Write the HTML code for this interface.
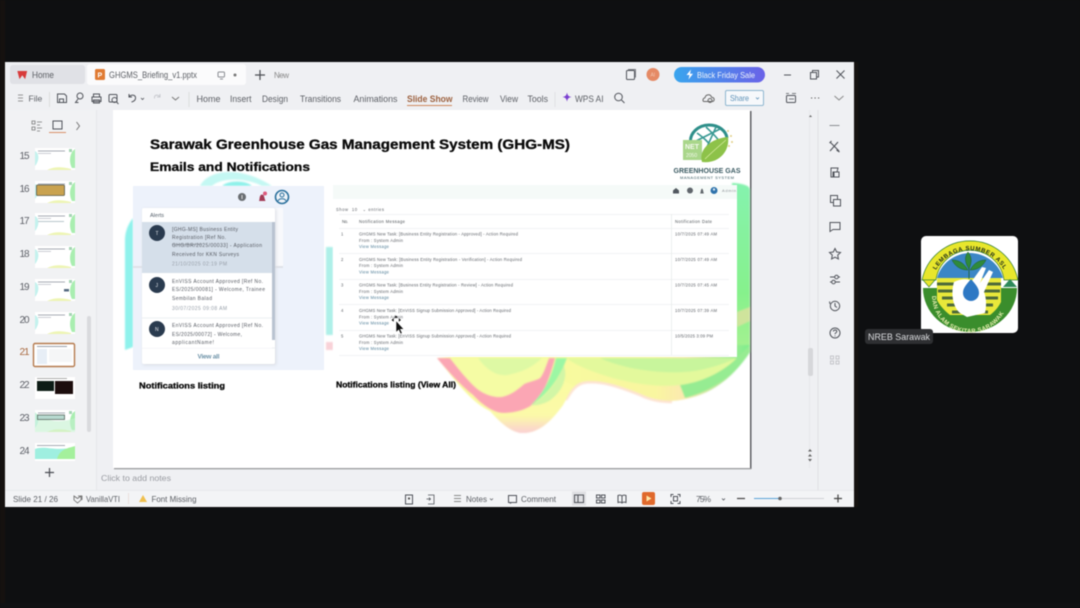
<!DOCTYPE html>
<html><head><meta charset="utf-8"><title>GHGMS Briefing</title>
<style>
html,body{margin:0;padding:0;background:#0e0f11;width:1080px;height:608px;overflow:hidden}
svg{display:block;filter:blur(.4px)}
text{font-family:"Liberation Sans",sans-serif}
.t{font-size:9px;fill:#5c5f65}
.s{font-size:5px;fill:#565a62}
.i{fill:none;stroke:#50535a;stroke-width:1}
.b{font-weight:bold;fill:#0a0a0a;stroke:#0a0a0a;stroke-width:.3}
.r{font-size:4.2px;fill:#60646a}
.v{font-size:4.2px;fill:#54819a}
</style></head><body>
<svg width="1080" height="608" viewBox="0 0 1080 608" xmlns="http://www.w3.org/2000/svg">
<defs>
<filter id="bl"><feGaussianBlur stdDeviation="1.5"/></filter>
<filter id="bl2"><feGaussianBlur stdDeviation=".8"/></filter>
<filter id="bl3"><feGaussianBlur stdDeviation=".2"/></filter>
<linearGradient id="pk" x1="0" y1="0" x2="0" y2="1"><stop offset="0" stop-color="#fafba0"/><stop offset=".7" stop-color="#fbf9a8"/><stop offset="1" stop-color="#fbcfd3"/></linearGradient>
<linearGradient id="gr" gradientUnits="userSpaceOnUse" x1="560" y1="0" x2="750" y2="0"><stop offset="0" stop-color="#f8fa9e"/><stop offset=".5" stop-color="#f9f6a0"/><stop offset=".66" stop-color="#fbe8b0"/><stop offset=".82" stop-color="#bde89a"/><stop offset="1" stop-color="#7cee8c"/></linearGradient>
<linearGradient id="sg" x1="0" y1="0" x2="0" y2="1"><stop offset="0" stop-color="#85f2ae"/><stop offset=".6" stop-color="#86f18c"/><stop offset="1" stop-color="#aef192"/></linearGradient>
<linearGradient id="bf" x1="0" y1="0" x2="1" y2="0"><stop offset="0" stop-color="#39a5ee"/><stop offset="1" stop-color="#6a62e8"/></linearGradient>
<g id="thumb">
<rect x="0" y="0" width="40" height="22" fill="#fff"/>
<path d="M0 3C4 5 5 12 0 18Z" fill="#c4f2ee"/>
<path d="M40 1C34 5 34 15 37 20L40 20Z" fill="#a9eeb0"/>
<path d="M12 22C20 18 28 19 36 21V22Z" fill="#eef5b4"/>
<rect x="3" y="2.500" width="27" height="1" fill="#a6abb4"/>
<rect x="3" y="5" width="13" height=".8" fill="#bec2c9"/>
<rect x="34" y="1" width="3" height="3" fill="#a5d4b4"/>
</g>
</defs>

<rect width="1080" height="608" fill="#0e0f11"/>
<rect x="0" y="0" width="5" height="608" fill="#15110f"/>
<rect x="854" y="62" width="4" height="445" fill="#151210"/>
<rect x="0" y="603" width="1080" height="5" fill="#101113"/>

<!-- window -->
<rect x="5" y="62" width="849" height="445" fill="#eff0f3"/>

<!-- tab strip -->
<rect x="10" y="65" width="75" height="19" rx="3" fill="#e0e1e6"/>
<path d="M18 71.500h8.500l-1.600 6.500-2.600-3.500-2.600 3.500z" fill="#d83b3b" stroke="#d83b3b" stroke-width="1"/>
<text x="32" y="78" class="t" textLength="22" lengthAdjust="spacingAndGlyphs">Home</text>
<rect x="87" y="64" width="159" height="21" rx="3" fill="#fbfbfc"/>
<rect x="95" y="69" width="10" height="11" rx="1.500" fill="#e07b33"/>
<text x="97.500" y="77.500" style="font-size:7px;font-weight:bold;fill:#fff">P</text>
<text x="109" y="78" class="t" textLength="88" lengthAdjust="spacingAndGlyphs">GHGMS_Briefing_v1.pptx</text>
<rect x="218" y="72" width="6.500" height="5" rx="1" class="i" style="stroke:#8a8d93"/>
<path d="M220 79h3" class="i" style="stroke:#8a8d93"/>
<circle cx="235" cy="75" r="1.500" fill="#777"/>
<path d="M260 70v10M255 75h10" stroke="#4a4c52" stroke-width="1.200"/>
<text x="274" y="78" class="t" style="font-size:8px;fill:#888" textLength="15">New</text>
<rect x="626.500" y="70.500" width="8" height="9" rx="1" class="i"/>
<path d="M628 69.500h7.500v8" class="i" style="stroke-width:.7"/>
<circle cx="653" cy="74.500" r="6.500" fill="#e58a65"/>
<text x="650.500" y="76.500" style="font-size:5px;fill:#f4c7b2">Al</text>
<rect x="674" y="67" width="91" height="15.500" rx="7.700" fill="url(#bf)"/>
<path d="M691 69.500l-4.500 5.500h3l-1 4.500 4.500-5.800h-3z" fill="#fff"/>
<text x="697" y="78" style="font-size:8.500px;fill:#f0f4fb" textLength="58" lengthAdjust="spacingAndGlyphs">Black Friday Sale</text>
<path d="M784 75h7" stroke="#50535a"/>
<rect x="810.500" y="72.500" width="6" height="6.500" class="i"/>
<path d="M812.500 72.500v-2h6v6.500h-2" class="i"/>
<path d="M836.500 70.500l8 8M844.500 70.500l-8 8" class="i"/>

<!-- toolbar -->
<path d="M18 95h5M18 98h5M18 101h5" stroke="#777" stroke-width=".8"/>
<text x="28.500" y="101.500" class="t" style="font-size:8.500px">File</text>
<path d="M49.500 92v15" stroke="#ddd"/>
<path d="M57.500 94h7l2 2v6.500h-9z" class="i"/><path d="M59.500 102v-3h4v3" class="i"/>
<circle cx="80" cy="96" r="3" class="i"/><path d="M78 99l-2.500 3.500h3" class="i"/>
<path d="M92 97h9v4.500h-9zM93.500 97v-3h6v3M93.500 100h6v3h-6z" class="i"/>
<rect x="109" y="94.500" width="8" height="7.500" rx="1" class="i"/><circle cx="114.500" cy="100" r="2.500" class="i"/><path d="M116.500 102l2 2" class="i"/>
<path d="M129 96.500c3-2.500 7-1.500 6.500 2-.3 2-2 3-4 3.500M129 94v3h3" class="i"/>
<path d="M141 98l1.500 1.500 1.500-1.500" class="i" style="stroke-width:.8"/>
<path d="M160 96.500c-3-2.500-6-1.500-5.500 2M160 94v3h-3" class="i" style="stroke:#c8cacf"/>
<path d="M172 97l3.500 3 3.500-3" class="i" style="stroke:#777"/>
<path d="M189 92v15" stroke="#ddd"/>
<text x="196.500" y="102" class="t" textLength="24" lengthAdjust="spacingAndGlyphs">Home</text>
<text x="230" y="102" class="t" textLength="21.500" lengthAdjust="spacingAndGlyphs">Insert</text>
<text x="262" y="102" class="t" textLength="26" lengthAdjust="spacingAndGlyphs">Design</text>
<text x="300" y="102" class="t" textLength="41" lengthAdjust="spacingAndGlyphs">Transitions</text>
<text x="353.500" y="102" class="t" textLength="44" lengthAdjust="spacingAndGlyphs">Animations</text>
<text x="407" y="102" class="t" style="font-weight:bold;fill:#9d6240" textLength="45.500" lengthAdjust="spacingAndGlyphs">Slide Show</text>
<text x="462.500" y="102" class="t" textLength="26" lengthAdjust="spacingAndGlyphs">Review</text>
<text x="500" y="102" class="t" textLength="18" lengthAdjust="spacingAndGlyphs">View</text>
<text x="527.500" y="102" class="t" textLength="20.500" lengthAdjust="spacingAndGlyphs">Tools</text>
<text x="575" y="102" class="t" textLength="28.500" lengthAdjust="spacingAndGlyphs">WPS AI</text>
<rect x="407" y="105" width="45" height="1" fill="#cf8a5e"/>
<path d="M555 92v15" stroke="#e0e0e3"/>
<path d="M567 92.500c.6 3 1.500 4 4.500 4.500-3 .5-3.900 1.500-4.500 4.800-.6-3.300-1.500-4.300-4.500-4.800 3-.5 3.900-1.500 4.500-4.500z" fill="#7a3fd0"/>
<circle cx="618.500" cy="97" r="3.800" class="i"/><path d="M621.500 100l3 3" class="i"/>
<path d="M704 101.500h8c3 0 3-4-.5-4.300-1-3.500-6-3-6.500.5-2.500.5-2.500 3.800-1 3.800z" class="i" style="stroke:#666"/><circle cx="710" cy="100.500" r="2" class="i" style="stroke:#666"/>
<rect x="725.500" y="90.500" width="38" height="15" rx="1.500" fill="#f6f8fb" stroke="#8fb6d0"/>
<text x="730" y="101" style="font-size:8.500px;fill:#5f92b8" textLength="19" lengthAdjust="spacingAndGlyphs">Share</text>
<path d="M756 97.500l1.500 1.500 1.500-1.500" stroke="#5f92b8" fill="none" stroke-width=".8"/>
<rect x="786.500" y="95.500" width="9" height="7" rx="1" class="i"/><path d="M786 93.500h3M792 93.500h4M789 99h5" class="i" style="stroke-width:.7"/>
<path d="M811 98h1.200M814.500 98h1.200M818 98h1.200" stroke="#555" stroke-width="1"/>
<path d="M834.500 96l4.500 4 4.500-4" class="i" style="stroke:#888"/>

<!-- left side panel -->
<rect x="5" y="110" width="91" height="380" fill="#f1f2f4"/>
<rect x="96" y="110" width="1" height="380" fill="#e6e7ea"/>
<path d="M32 121h3v3h-3zM32 127h3v3h-3zM37 122h5M37 125h3M37 128h5M37 131h3" class="i" style="stroke:#777;stroke-width:.8"/>
<rect x="53" y="121" width="9" height="8" class="i"/>
<rect x="49" y="132" width="17" height="1" fill="#d9906a"/>
<path d="M76.500 122l3 4-3 4" class="i" style="stroke:#777"/>
<text x="19.500" y="159" style="font-size:10px;fill:#5c5f66" textLength="10">15</text>
<text x="19.500" y="192" style="font-size:10px;fill:#5c5f66" textLength="10">16</text>
<text x="19.500" y="224" style="font-size:10px;fill:#5c5f66" textLength="10">17</text>
<text x="19.500" y="257" style="font-size:10px;fill:#5c5f66" textLength="10">18</text>
<text x="19.500" y="290" style="font-size:10px;fill:#5c5f66" textLength="10">19</text>
<text x="19.500" y="323" style="font-size:10px;fill:#5c5f66" textLength="10">20</text>
<text x="19.500" y="355" style="font-size:10px;fill:#a8683e" textLength="10">21</text>
<text x="19.500" y="388" style="font-size:10px;fill:#5c5f66" textLength="10">22</text>
<text x="19.500" y="421" style="font-size:10px;fill:#5c5f66" textLength="10">23</text>
<text x="19.500" y="454" style="font-size:10px;fill:#5c5f66" textLength="10">24</text>
<g filter="url(#bl3)">
<use href="#thumb" x="35" y="148"/>
<use href="#thumb" x="35" y="181"/>
<rect x="36.500" y="185" width="28" height="10.500" rx="1" fill="#c9a24f" stroke="#55584a" stroke-width=".8"/>
<use href="#thumb" x="35" y="213"/>
<rect x="38" y="221" width="26" height="1" fill="#b8c6cc"/>
<use href="#thumb" x="35" y="246"/>
<use href="#thumb" x="35" y="279"/>
<rect x="64" y="289" width="5" height="2.500" fill="#556a80"/>
<use href="#thumb" x="35" y="312"/>
<rect x="33.500" y="343.500" width="41" height="23" rx="1.500" fill="#fff" stroke="#b57a4e" stroke-width="1.400"/>
<rect x="37" y="346" width="30" height="1" fill="#9aa0aa"/>
<rect x="37" y="349" width="10" height="15" fill="#e7eef6"/>
<rect x="49" y="349" width="23" height="13" fill="#f5f6f7"/>
<rect x="35" y="377" width="40" height="22" fill="#fff"/>
<rect x="37" y="381" width="17" height="10" fill="#0a1a14"/>
<rect x="55" y="381" width="18" height="13" fill="#1a0c0e"/>
<rect x="37" y="378" width="30" height="1" fill="#aaa"/>
<use href="#thumb" x="35" y="410"/>
<path d="M35 412C43 421 60 424 75 418V432H35Z" fill="#c3f0cf" opacity=".6"/>
<rect x="37.500" y="415" width="27" height="4.500" fill="#b7d9cf" stroke="#586a60" stroke-width=".8"/>
<rect x="35" y="443" width="40" height="18" fill="#fff"/>
<path d="M35 449C45 445 55 452 75 447V459H35Z" fill="#9fefe0"/>
<path d="M57 459C60 448 70 448 75 446V459Z" fill="#a4f09c"/>
<rect x="37" y="445" width="28" height="1" fill="#a6abb4"/>
</g>
<rect x="87" y="316" width="4" height="116" rx="2" fill="#d9dadd"/>
<path d="M49.500 468v9M45 472.500h9" stroke="#4a4c52" stroke-width="1.200"/>

<!-- right rail -->
<rect x="817.500" y="110" width="1" height="380" fill="#e0e1e4"/>
<path d="M829.500 125.500h10" stroke="#8a8c92"/>
<g class="i">
<path d="M830 142l9 9M838 142l-8 9M829.500 143l2-2M836.500 150l3 2" stroke-width="1.100"/>
<path d="M831 168h7l-1 4h-4v5h-2zM834 172h5v5h-5z"/>
<rect x="830.500" y="195.500" width="7" height="7"/><rect x="833.500" y="199.500" width="7" height="6.500" fill="#eff0f3"/>
<path d="M830 222.500h10v7h-7l-3 2z"/>
<path d="M835 248.500l1.700 3.500 3.800.5-2.800 2.600.7 3.900-3.400-1.800-3.400 1.800.7-3.900-2.800-2.600 3.800-.5z"/>
<path d="M830 277h5M838 277h2M830 282h2M835 282h5"/><circle cx="836.500" cy="277" r="1.800"/><circle cx="833.500" cy="282" r="1.800"/>
<circle cx="835" cy="306" r="4.700"/><path d="M835 303v3l2 1.500M830 304l-.5-2.500"/>
<circle cx="835" cy="333" r="5"/><path d="M833.300 331.500c.3-2 3.500-2 3.500 0 0 1.300-1.800 1.300-1.800 2.800M835 335.500v.8"/>
</g>
<g fill="none" stroke="#c4c6ca"><rect x="830.500" y="356" width="3" height="3"/><rect x="836" y="356" width="3" height="3"/><rect x="830.500" y="361" width="3" height="3"/><rect x="836" y="361" width="3" height="3"/></g>
<rect x="809" y="110" width="1" height="358" fill="#e6e7ea"/>
<path d="M810.500 115l-1.500 2h3z" fill="#666"/>
<rect x="808" y="348" width="5" height="28" rx="2" fill="#d6d7da"/>
<path d="M810 449l-2 2.500h4zM810 454l-2 2.500h4zM808 459h4l-2 2.500z" fill="#666"/>

<!-- slide -->
<rect x="113" y="110" width="637" height="358" fill="#fff"/>
<rect x="750" y="111" width="1.500" height="358" fill="#5f6064"/>
<rect x="114" y="468" width="637" height="1.300" fill="#9b9c9f"/>

<!-- decoration -->
<g filter="url(#bl2)">
<path d="M200 186C208 170 240 165 272 186H262C245 177 220 178 212 186Z" fill="#c4f8f3"/>
<path d="M222 186C228 180 246 180 252 186Z" fill="#8ff1ea"/>
<path d="M133 218C128 224 125 232 125 240V350L133 347Z" fill="#8ff2ec"/>
<rect x="326" y="247" width="7" height="88" fill="#aef0e8"/>
<path d="M326 342h7v8h-7z" fill="#f9d2d8"/>
<path d="M734 183C745 184 750 186 750 190V352C745 358 738 362 732 366V183Z" fill="url(#sg)"/>
<path d="M737 312l13-5v14l-13 6z" fill="#cfe49c"/>

<path d="M437 358C452 376 470 402 490 411 505 428 515 433 523 433 540 433 552 420 563 405 570 393 574 385 583 383 600 380 620 387 640 395 655 402 670 403 690 398 715 392 735 375 750 352V345H556Z" fill="url(#gr)"/>
<path d="M566 400C572 390 576 385 583 383 600 380 620 387 640 395 650 400 660 402 672 402" fill="none" stroke="#fde3d2" stroke-width="2.500"/>
<path d="M566 358C585 372 640 390 680 385 705 382 725 370 737 358Z" fill="#e3f99c"/>
<path d="M600 358C625 370 670 376 700 370 715 367 728 362 737 358Z" fill="#c8f59c"/>
<path d="M685 398C710 392 735 375 750 352V345L737 358C725 370 705 382 680 385Z" fill="#96ec92"/>
<path d="M470 395C480 405 485 408 490 411 505 428 515 433 523 433 540 433 552 420 563 405 568 396 570 390 575 386L552 375 500 385Z" fill="url(#pk)"/>
<path d="M437 358C447 370 460 385 473 395 483 406 495 413 503 413 515 413 525 410 532 405 542 398 550 378 555 358H549C546 365 544 373 540 378 535 381 530 381 524 384 515 392 507 397 498 397 488 396 480 392 473 385 465 377 457 367 450 358Z" fill="#fba6b4"/>
<path d="M450 358C457 367 465 377 473 385 480 392 488 396 498 397 507 397 515 392 524 384 530 381 535 381 540 378 544 373 546 365 549 358Z" fill="#f5fca4"/>
<path d="M478 358C488 372 500 378 512 374 525 371 535 365 542 358Z" fill="#def9a4"/>
<path d="M556 358H567C562 372 552 392 531 405 545 392 552 375 556 358Z" fill="#9cf7a4"/>
<path d="M531 405C548 396 558 380 564 366 568 378 562 392 549 401 543 404 537 406 531 405Z" fill="#d2f6a6"/>
</g>

<!-- titles -->
<text x="150" y="149" class="b" style="font-size:13.500px" textLength="420" lengthAdjust="spacingAndGlyphs">Sarawak Greenhouse Gas Management System (GHG-MS)</text>
<text x="150" y="171" class="b" style="font-size:12px" textLength="160" lengthAdjust="spacingAndGlyphs">Emails and Notifications</text>
<text x="139" y="388.500" class="b" style="font-size:8px" textLength="86" lengthAdjust="spacingAndGlyphs">Notifications listing</text>
<text x="336" y="387.500" class="b" style="font-size:8px" textLength="120" lengthAdjust="spacingAndGlyphs">Notifications listing (View All)</text>

<!-- GHG logo -->
<g filter="url(#bl3)">
<path d="M691 145C688 133 699 125 709 125 719 125 726 131 727 138" fill="none" stroke="#2f8f8a" stroke-width="3"/>
<path d="M697 133C704 138 710 143 712 149M706 127C711 132 716 136 719 141M694 142L720 129M716 127L707 147" stroke="#3a9a94" stroke-width="1.600" fill="none"/>
<rect x="683" y="140" width="19" height="20" fill="#a9d68a"/>
<text x="685" y="149" style="font-size:7px;font-weight:bold;fill:#f4f9ee">NET</text>
<text x="686" y="157" style="font-size:5px;fill:#f4f9ee">2050</text>
<path d="M702 162C698 149 712 138 728 137 730 151 719 164 702 162Z" fill="#8dc24a"/>
<path d="M705 159C711 153 718 147 726 140" stroke="#d7ec9f" stroke-width=".8" fill="none"/>
<circle cx="728" cy="131" r="1" fill="#e0cf86"/><circle cx="731" cy="136" r="1" fill="#e0cf86"/><circle cx="732" cy="142" r="1" fill="#e0cf86"/><circle cx="729" cy="146" r="1" fill="#e0cf86"/>
<text x="673.500" y="173" style="font-size:7px;font-weight:bold;fill:#3a5a62" textLength="67" lengthAdjust="spacing">GREENHOUSE GAS</text>
<text x="680" y="179" style="font-size:4px;fill:#3a5a62" textLength="54" lengthAdjust="spacing">MANAGEMENT SYSTEM</text>
</g>

<g filter="url(#bl3)">
<!-- left screenshot card -->
<rect x="133" y="186" width="191" height="184" fill="#edf2fb"/>
<rect x="275" y="208" width="8" height="60" fill="#f8f9fc"/>
<rect x="133" y="266" width="150" height="2" fill="#dfe2e8"/>
<circle cx="242" cy="197" r="4" fill="#6a6e72"/><rect x="241.500" y="195" width="1" height="4" fill="#ddd"/>
<path d="M259 201c1-2 0-5 2.500-6.500l2 .5c1 2 1 4 2 6z" fill="#a23a55"/><circle cx="265" cy="193.500" r="2" fill="#dc5a7d"/>
<circle cx="282" cy="197" r="6.500" fill="#eef3f8" stroke="#2a6f9c" stroke-width="1.600"/><circle cx="282" cy="195" r="2" fill="none" stroke="#2a6f9c"/><path d="M278 201c1-3 7-3 8 0" fill="none" stroke="#2a6f9c"/>

<rect x="143" y="209" width="133" height="156" fill="#d9dce2" filter="url(#bl)"/>
<rect x="142" y="208" width="133" height="156" rx="2" fill="#fff"/>
<text x="150" y="217" style="font-size:5.500px;fill:#55606a">Alerts</text>
<rect x="142" y="222" width="132" height="51" fill="#d5dfea"/>
<rect x="272" y="222" width="3" height="118" fill="#b9c3d1"/>
<path d="M142 318h130M142 348h133" stroke="#e8eaee" stroke-width=".7"/>
<circle cx="157" cy="233" r="8" fill="#2c3b4f"/>
<text x="155.500" y="235" style="font-size:5px;fill:#dfe4ea">T</text>
<circle cx="157" cy="285" r="8" fill="#2c3b4f"/>
<text x="155.500" y="287" style="font-size:5px;fill:#dfe4ea">J</text>
<circle cx="157" cy="329" r="8" fill="#2c3b4f"/>
<text x="155" y="331" style="font-size:5px;fill:#dfe4ea">N</text>
<text x="172" y="231" class="s" textLength="66">[GHG-MS] Business Entity</text>
<text x="172" y="239" class="s" textLength="54">Registration [Ref No.</text>
<text x="172" y="247" class="s" textLength="90">GHG/BR/2025/00033] - Application</text>
<text x="172" y="256" class="s" textLength="67">Received for KKN Surveys</text>
<text x="172" y="265.500" class="s" style="fill:#98a0aa" textLength="55">21/10/2025 02:19 PM</text>
<path d="M172 244.500h30" stroke="#777c84" stroke-width=".5"/>
<text x="172" y="283" class="s" textLength="91">EnVISS Account Approved [Ref No.</text>
<text x="172" y="291" class="s" textLength="93">ES/2025/00081] - Welcome, Trainee</text>
<text x="172" y="300" class="s" textLength="40">Sembilan Balad</text>
<text x="172" y="310" class="s" style="fill:#98a0aa" textLength="55">30/07/2025 09:08 AM</text>
<text x="172" y="327" class="s" textLength="91">EnVISS Account Approved [Ref No.</text>
<text x="172" y="336" class="s" textLength="70">ES/2025/00072] - Welcome,</text>
<text x="172" y="344" class="s" textLength="42">applicantName!</text>
<rect x="142" y="346" width="130" height="2" fill="#fff"/>
<text x="197.500" y="358.500" style="font-size:6.500px;font-weight:bold;fill:#6e93a8" textLength="22">View all</text>

<!-- right screenshot -->
<rect x="333" y="185" width="404" height="172" fill="#fff"/>
<rect x="333" y="185" width="404" height="14" fill="#f5faf8"/>
<path d="M673 190.500l3-2.500 3 2.500v3h-6z" fill="#51585e"/>
<circle cx="690" cy="190.500" r="3" fill="#60666c"/>
<path d="M700 193.500c1-1 .5-4 2-5 1.500 1 1 4 2 5z" fill="#5f656a"/>
<circle cx="714" cy="190.500" r="3.500" fill="#2f72ab"/><circle cx="714" cy="189.500" r="1.200" fill="#d8e6f2"/>
<text x="722" y="192" style="font-size:4px;fill:#8a8f94" textLength="14">Admin</text>
<text x="336" y="211" class="r" textLength="48">Show&#160; 10&#160; &#160;&#8964; entries</text>
<path d="M339 228.500h390M339 253.500h390M339 279.500h390M339 304.500h390M339 330.500h390M339 355.500h390M339 214.500h390" stroke="#eef0f2" stroke-width=".7"/>
<path d="M671.500 214v141" stroke="#e6e8ea" stroke-width=".7"/>
<text x="342" y="223" class="r" style="fill:#4e5358" textLength="6">No.</text>
<text x="359" y="223" class="r" style="fill:#4e5358" textLength="46">Notification Message</text>
<text x="675" y="223" class="r" style="fill:#4e5358" textLength="37">Notification Date</text>

<text x="341" y="235.500" class="r">1</text>
<text x="359" y="235.500" class="r" textLength="159">GHGMS New Task: [Business Entity Registration - Approved] - Action Required</text>
<text x="359" y="242" class="r" textLength="44">From : System Admin</text>
<text x="359" y="248" class="v" textLength="30">View Message</text>
<text x="675" y="235.500" class="r" textLength="42">10/7/2025 07:49 AM</text>

<text x="341" y="261" class="r">2</text>
<text x="359" y="261" class="r" textLength="163">GHGMS New Task: [Business Entity Registration - Verification] - Action Required</text>
<text x="359" y="267" class="r" textLength="44">From : System Admin</text>
<text x="359" y="273.500" class="v" textLength="30">View Message</text>
<text x="675" y="261" class="r" textLength="42">10/7/2025 07:49 AM</text>

<text x="341" y="286.500" class="r">3</text>
<text x="359" y="286.500" class="r" textLength="154">GHGMS New Task: [Business Entity Registration - Review] - Action Required</text>
<text x="359" y="293" class="r" textLength="44">From : System Admin</text>
<text x="359" y="299" class="v" textLength="30">View Message</text>
<text x="675" y="286.500" class="r" textLength="42">10/7/2025 07:45 AM</text>

<text x="341" y="312" class="r">4</text>
<text x="359" y="312" class="r" textLength="152">GHGMS New Task: [EnVISS Signup Submission Approved] - Action Required</text>
<text x="359" y="318.500" class="r" textLength="44">From : System Admin</text>
<text x="359" y="324.500" class="v" textLength="30">View Message</text>
<text x="675" y="312" class="r" textLength="42">10/7/2025 07:39 AM</text>

<text x="341" y="337.500" class="r">5</text>
<text x="359" y="337.500" class="r" textLength="152">GHGMS New Task: [EnVISS Signup Submission Approved] - Action Required</text>
<text x="359" y="344" class="r" textLength="44">From : System Admin</text>
<text x="359" y="350" class="v" textLength="30">View Message</text>
<text x="675" y="337.500" class="r" textLength="38">10/5/2025 3:09 PM</text>
</g>

<!-- cursor -->
<path d="M396 320.500L396 332.500 398.700 330 400.500 334 402.300 333.200 400.500 329.300 404 329.300Z" fill="#111" stroke="#fff" stroke-width=".6"/>
<path d="M396 315.500l-1.800 2.200h3.600zM391.500 320l2.200-1.800v3.600zM401 320l-2.200-1.800v3.600z" fill="#111"/>

<!-- notes -->
<text x="101" y="481" style="font-size:8.500px;fill:#9a9ca2" textLength="70" lengthAdjust="spacingAndGlyphs">Click to add notes</text>

<!-- status bar -->
<rect x="5" y="490" width="849" height="17" fill="#f3f4f6"/>
<rect x="5" y="490" width="849" height=".7" fill="#e4e5e8"/>
<text x="13" y="502" class="t" style="font-size:8.500px" textLength="45" lengthAdjust="spacingAndGlyphs">Slide 21 / 26</text>
<path d="M74 496l3.500 2.500 3.500-2.500v4l-3.500 3-3.500-3zM78 496h4v4" class="i" style="stroke:#666;stroke-width:.8"/>
<text x="86" y="502" class="t" style="font-size:8.500px" textLength="34" lengthAdjust="spacingAndGlyphs">VanillaVTI</text>
<path d="M128.500 493v11" stroke="#eadfdd"/>
<path d="M143 495l4 7h-8z" fill="#efc04f"/>
<text x="151.500" y="502" class="t" style="font-size:8.500px" textLength="45" lengthAdjust="spacingAndGlyphs">Font Missing</text>
<rect x="405.500" y="495" width="7" height="9" class="i"/><rect x="408" y="497.500" width="2" height="2" fill="#555"/>
<path d="M428 495h6v9h-6M426.500 499h4M429 497.500l1.500 1.500-1.500 1.500" class="i" style="stroke-width:.8"/>
<path d="M454 495.500h7M454 498.500h7M454 501.500h7" stroke="#666" stroke-width=".8"/>
<text x="466" y="502" class="t" style="font-size:8.500px" textLength="21" lengthAdjust="spacingAndGlyphs">Notes</text>
<path d="M490 498.500l1.500 1.500 1.500-1.500" class="i" style="stroke-width:.7"/>
<rect x="508.500" y="495.500" width="8" height="7" class="i"/>
<path d="M510 503.500l1.500-1" class="i"/>
<text x="521" y="502" class="t" style="font-size:8.500px" textLength="35" lengthAdjust="spacingAndGlyphs">Comment</text>
<rect x="572" y="491.500" width="14" height="14" fill="#dfe0e3"/>
<rect x="574.500" y="495" width="9" height="7.500" class="i"/><path d="M578 495v7.500" class="i"/>
<rect x="596.500" y="495" width="3.500" height="3" class="i"/><rect x="601.500" y="495" width="3.500" height="3" class="i"/><rect x="596.500" y="500" width="3.500" height="3" class="i"/><rect x="601.500" y="500" width="3.500" height="3" class="i"/>
<path d="M618 495.500c1.500-.5 3-.5 4 .5 1-1 2.500-1 4-.5v7c-1.500-.5-3-.5-4 .5-1-1-2.500-1-4-.5zM622 496v7" class="i"/>
<rect x="642" y="492" width="13" height="13" rx="2" fill="#e0692c"/>
<path d="M646.500 495.500l5 3-5 3z" fill="#ffe8a8"/>
<path d="M671 497v-2.500h2.500M677.500 494.500h2.500v2.500M680 501v2.500h-2.500M673.500 503.500h-2.500v-2.500" class="i"/><rect x="673.500" y="496.500" width="4" height="4.500" class="i"/>
<text x="696" y="502" class="t" style="font-size:8.500px" textLength="15">75%</text>
<path d="M722 498.500l1.500 1.500 1.500-1.500" class="i" style="stroke-width:.8"/>
<path d="M737 498.500h8" stroke="#444" stroke-width="1.200"/>
<path d="M754 498.500h25" stroke="#5aa3d8" stroke-width="1"/>
<path d="M782 498.500h42" stroke="#cfd1d5" stroke-width="1"/>
<circle cx="780" cy="498.500" r="1.800" fill="#666"/>
<path d="M834 498.500h8M838 494.500v8" stroke="#444" stroke-width="1.200"/>

<!-- participant tile -->
<rect x="921" y="236" width="97" height="97" rx="5" fill="#fff"/>
<path d="M922 280A49 49 0 0 1 1018 280L1004 280A34.300 34.300 0 0 0 936 280Z" fill="#e8e62c" stroke="#2e7d2e" stroke-width=".7"/>
<path d="M937 278A34.300 34.300 0 0 1 1003 278Z" fill="#3b86c6"/>
<path d="M923 288A47 44 0 0 0 1017 288Z" fill="#3a8d2c"/>
<path d="M923 280h12l-6 7z" fill="#e8e62c" stroke="#2e7d2e" stroke-width=".6"/>
<path d="M1003 287l7-8 7 8z" fill="#2e8a5a"/>
<path d="M937 278H1001V302C998 308 994 312 990 315H950C945 311 940 306 937 300Z" fill="#e8e83a"/>
<path d="M937 284h64M938 291h62M942 298h56M947 305h46M952 312h36" stroke="#4d6a3a" stroke-width="3"/>
<path d="M954 282C951 292 952 306 960 313L967 317 985 313C987 304 986 297 984 292L993 272 989 270 980 283 986 268 982 267 972 281C966 278 960 279 954 282Z" fill="#fff"/>
<path d="M971 279C966 285 963 288 963 293A8 8 0 0 0 979 293C979 288 976 285 971 279Z" fill="#2e78c4"/>
<path d="M968 252C972 257 972 262 969 269 965 263 964 257 968 252ZM952 260C959 260 964 263 968 270 960 270 955 266 952 260ZM986 260C979 260 974 263 970 270 978 270 983 266 986 260Z" fill="#2f8a3b" stroke="#1f5e2a" stroke-width=".5"/>
<path d="M969 268v11" stroke="#1f5e2a" stroke-width=".8"/>
<defs>
<path id="arcT" d="M936 270A39 39 0 0 1 1004 270"/>
<path id="arcB" d="M932 296A38 37 0 0 0 1008 296"/>
</defs>
<text style="font-size:6px;font-weight:bold;fill:#1a2a1a"><textPath href="#arcT" textLength="84">LEMBAGA SUMBER ASLI</textPath></text>
<text style="font-size:6px;font-weight:bold;fill:#e8efb0"><textPath href="#arcB" textLength="100">DAN ALAM SEKITAR SARAWAK</textPath></text>

<rect x="865" y="329" width="68" height="15" rx="3" fill="#2e2f32"/>
<text x="868" y="340" style="font-size:9.500px;fill:#dcdde0" textLength="62" lengthAdjust="spacingAndGlyphs">NREB Sarawak</text>
</svg>
</body></html>
